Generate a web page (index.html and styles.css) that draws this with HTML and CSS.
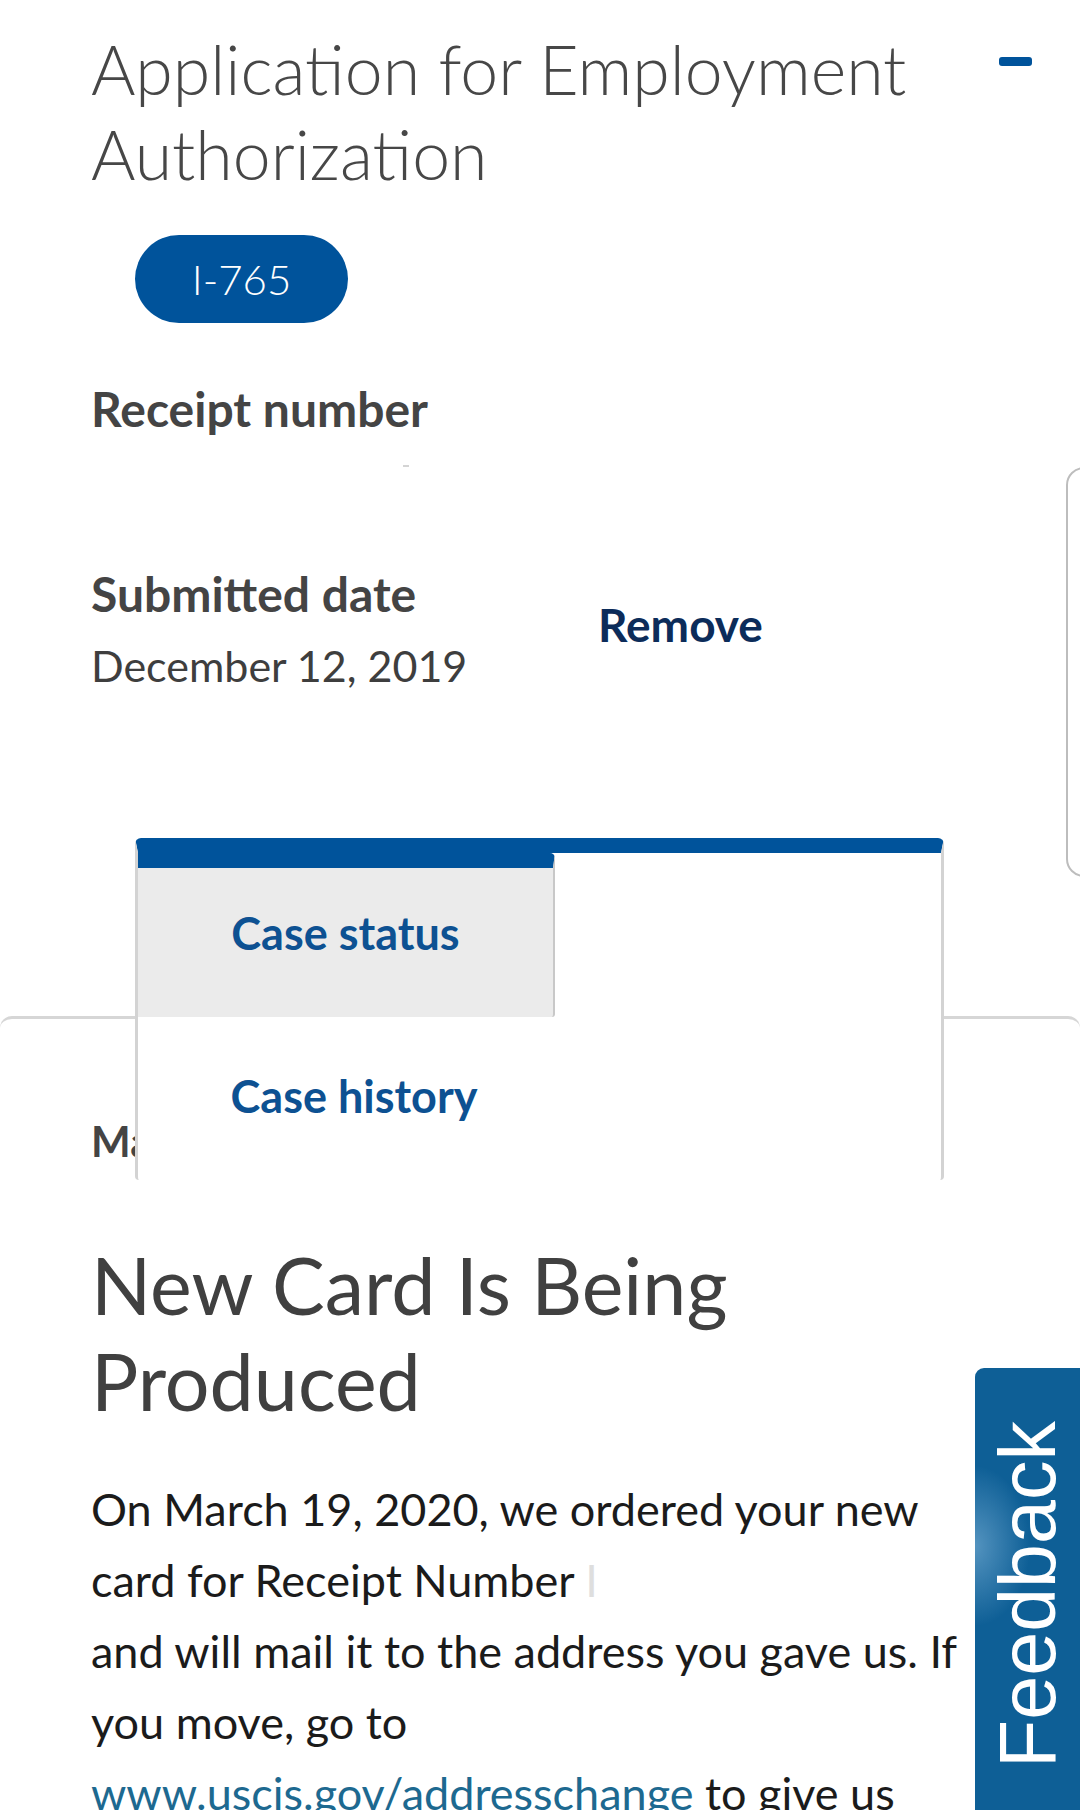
FILE: index.html
```html
<!DOCTYPE html>
<html lang="en">
<head>
<meta charset="utf-8">
<title>Application for Employment Authorization</title>
<link rel="stylesheet" href="styles.css">
</head>
<body>
<div class="page">
  <header class="app-head">
    <h1 class="app-title">Application for Employment Authorization</h1>
    <button class="collapse" type="button" aria-label="Collapse"><span class="minus"></span></button>
  </header>

  <div class="form-badge">I-765</div>

  <section class="meta">
    <div class="label">Receipt number</div>
    <div class="receipt-value"><span class="trace"></span></div>

    <div class="field-row">
      <div class="field">
        <div class="label">Submitted date</div>
        <div class="value">December 12, 2019</div>
      </div>
      <a class="remove" href="#">Remove</a>
    </div>
  </section>

  <div class="case-nav">
    <section class="status-box">
      <div class="box-label">Mailed</div>
      <h2 class="status-title">New Card Is Being Produced</h2>
      <p class="status-text">On March 19, 2020, we ordered your new card for Receipt Number <span class="redacted"><span class="faint">I</span>OE0912345678</span> and will mail it to the address you gave us. If you move, go to <a class="link" href="#">www.uscis.gov/addresschange</a> to give us your new mailing address.</p>
    </section>

    <nav class="tab-menu">
      <a class="tab tab-active" href="#">Case status</a>
      <a class="tab tab-next" href="#">Case history</a>
    </nav>
  </div>
</div>

<div class="edge-panel"></div>
<a class="feedback" href="#">Feedback</a>
</body>
</html>
```

FILE: styles.css
```css
html, body {
  margin: 0;
  padding: 0;
  background: #ffffff;
}

body {
  width: 1080px;
  height: 1810px;
  overflow: hidden;
  position: relative;
  font-family: "Lato", "Liberation Sans", sans-serif;
}

.page {
  padding: 0 48px 0 91px;
}

.app-head {
  display: flex;
  justify-content: space-between;
  align-items: flex-start;
}

.app-title {
  margin: 26px 0 0 0;
  font-weight: 300;
  font-size: 68px;
  line-height: 85px;
  color: #474747;
  max-width: 860px;
}

.collapse {
  margin-top: 57px;
  padding: 0;
  border: 0;
  background: none;
  width: 33px;
  height: 9px;
  display: block;
  flex-shrink: 0;
}

.minus {
  display: block;
  width: 33px;
  height: 9px;
  border-radius: 3px;
  background: #00539b;
}

.form-badge {
  margin: 39px 0 0 44px;
  width: 213px;
  height: 88px;
  border-radius: 44px;
  background: #00539b;
  color: #ffffff;
  display: flex;
  align-items: center;
  justify-content: center;
  font-weight: 300;
  font-size: 42px;
}

.meta {
  margin-top: 58px;
}

.label {
  font-weight: 700;
  font-size: 48px;
  line-height: 56px;
  color: #444444;
}

.receipt-value {
  height: 129px;
  position: relative;
}

.trace {
  position: absolute;
  left: 312px;
  top: 28px;
  width: 6px;
  height: 2px;
  background: #d4d4d4;
}

.field-row {
  display: grid;
  grid-template-columns: 507px auto;
  align-items: start;
}

.value {
  margin-top: 19px;
  font-size: 43px;
  line-height: 50px;
  color: #3e3e3e;
}

.remove {
  margin-top: 31px;
  font-weight: 700;
  font-size: 46px;
  line-height: 56px;
  color: #0c2c5a;
  text-decoration: none;
  justify-self: start;
}

.case-nav {
  display: flow-root;
  position: relative;
  margin: 147px -48px 0 -91px;
}

.status-box {
  margin-top: 178px;
  border-top: 3px solid #d6d6d6;
  border-radius: 12px 12px 0 0;
  padding: 94px 105px 0 91px;
}

.box-label {
  font-weight: 700;
  font-size: 42px;
  line-height: 56px;
  color: #444444;
}

.status-title {
  margin: 68px 0 0 0;
  font-weight: 400;
  font-size: 79px;
  line-height: 96px;
  color: #404040;
}

.status-text {
  margin: 45px 0 0 0;
  font-size: 45px;
  line-height: 71px;
  color: #1b1b1b;
}

.redacted {
  color: #ffffff;
}

.faint {
  color: #dedede;
}

.link {
  color: #1d6990;
  text-decoration: underline;
  text-decoration-thickness: 2px;
  white-space: nowrap;
}

.tab-menu {
  position: absolute;
  top: 0;
  left: 135px;
  width: 809px;
  height: 342px;
  box-sizing: border-box;
  background: #ffffff;
  border-top: 15px solid #00539b;
  border-left: 3px solid #d3d3d3;
  border-right: 3px solid #d3d3d3;
  border-radius: 6px 6px 4px 4px;
  display: flex;
  flex-direction: column;
}

.tab {
  display: block;
  width: 417px;
  box-sizing: border-box;
  text-align: center;
  font-weight: 700;
  font-size: 45px;
  line-height: 56px;
  color: #0d5192;
  text-decoration: none;
  padding-top: 51px;
}

.tab-next {
  padding-left: 15px;
}

.tab-active {
  background: #ebebeb;
  border-top: 15px solid #00539b;
  border-right: 2px solid #c8c8c8;
  border-radius: 0 5px 3px 0;
  padding-top: 37px;
  height: 164px;
}

.edge-panel {
  position: absolute;
  left: 1066px;
  top: 467px;
  width: 40px;
  height: 410px;
  box-sizing: border-box;
  border: 2px solid #bdbdbd;
  border-radius: 18px;
}

.feedback {
  position: absolute;
  left: 975px;
  top: 1368px;
  width: 105px;
  height: 442px;
  box-sizing: border-box;
  padding-bottom: 12px;
  border-radius: 0 0 9px 0;
  background:
    radial-gradient(ellipse 55px 80px at 105px 264px, rgba(140, 190, 225, 0.55), rgba(140, 190, 225, 0) 100%),
    #0e5f96;
  color: #ffffff;
  text-decoration: none;
  font-family: "Liberation Sans", Arial, sans-serif;
  font-size: 79px;
  line-height: 105px;
  writing-mode: vertical-rl;
  transform: rotate(180deg);
  text-align: center;
}
```
